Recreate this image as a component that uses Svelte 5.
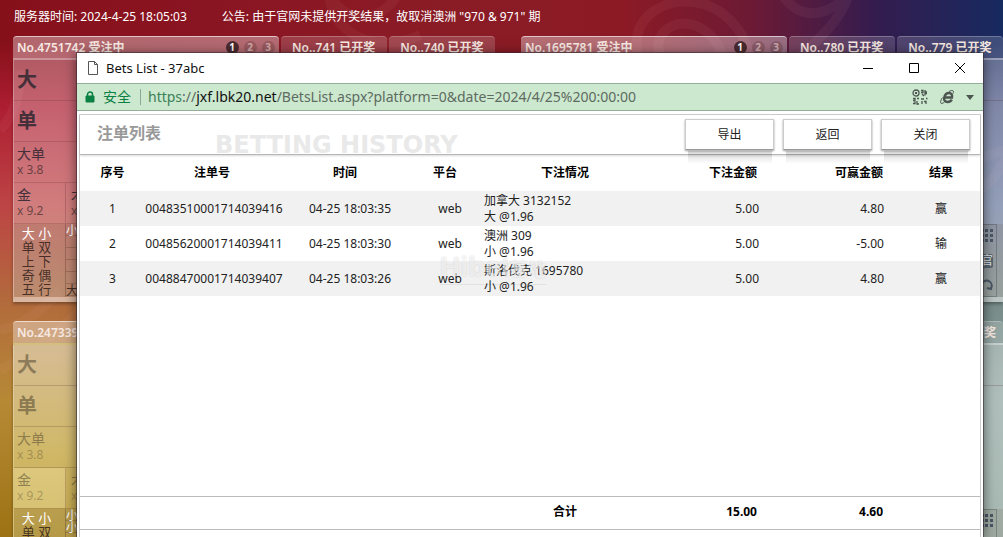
<script lang="ts">
	const bets = [
		{ id: '00483510001714039416', time: '04-25 18:03:35', platform: 'web', game: '加拿大 3132152', pick: '大 @1.96', stake: 5, win: 4.8 },
		{ id: '00485620001714039411', time: '04-25 18:03:30', platform: 'web', game: '澳洲 309', pick: '小 @1.96', stake: 5, win: -5 },
		{ id: '00488470001714039407', time: '04-25 18:03:26', platform: 'web', game: '斯洛伐克 1695780', pick: '小 @1.96', stake: 5, win: 4.8 },
	];

	const boards = [
		{
			theme: 'red',
			current: 'No.4751742 受注中',
			past: ['No..741 已开奖', 'No..740 已开奖'],
			steps: [1, 2, 3],
			roads: ['大 小', '单 双', '上 下', '奇 偶', '五 行'],
			beads: ['小', '', '', '', '', '大'],
		},
		{
			theme: 'blue',
			current: 'No.1695781 受注中',
			past: ['No..780 已开奖', 'No..779 已开奖'],
			steps: [1, 2, 3],
			roads: [],
			beads: [],
		},
		{
			theme: 'gold',
			current: 'No.2473393',
			past: [],
			steps: [],
			roads: ['大 小', '单 双'],
			beads: ['小', '小'],
		},
		{ theme: 'teal', current: '', past: ['', '已开奖'], steps: [], roads: [], beads: [] },
	];

	const actions = ['导出', '返回', '关闭'];

	const totalStake = bets.reduce((sum, bet) => sum + bet.stake, 0);
	const totalWin = bets.reduce((sum, bet) => sum + bet.win, 0);
</script>

{#snippet columns()}
	<colgroup>
		<col class="c-no" />
		<col class="c-id" />
		<col class="c-time" />
		<col class="c-platform" />
		<col />
		<col class="c-stake" />
		<col class="c-win" />
		<col class="c-result" />
	</colgroup>
{/snippet}

<div class="page">
	<svg class="swirls" viewBox="0 0 1003 537" preserveAspectRatio="none" aria-hidden="true">
		<path d="M640 60C620 10 690-20 730 20S730 90 700 70M660 55c-10-25 25-45 50-20s5 40-10 35" />
		<path d="M780-10c20 40 60 20 70 0-10 40-50 60-60 80" />
		<path d="M400-10c-20 40-60 30-70 5 0 40 50 60 90 40" />
		<path d="M0 370q40-20 80-60M0 330q30-5 60-40M0 130q20-20 20-60" />
		<path d="M980 190q20-15 30-40M980 160q12-8 30-10" />
	</svg>

	<header class="notice">
		<span>服务器时间: 2024-4-25 18:05:03</span>
		<span>公告: 由于官网未提供开奖结果，故取消澳洲 "970 &amp; 971" 期</span>
	</header>

	<main class="boards">
		{#each boards as board}
			<section class="board {board.theme}">
				<div class="tabs">
					<div class="tab current">
						<b>{board.current}</b>
						<span class="steps">
							{#each board.steps as step}
								<i class:on={step === 1}>{step}</i>
							{/each}
						</span>
					</div>
					{#each board.past as name}
						<div class="tab"><b>{name}</b></div>
					{/each}
				</div>
				<div class="body">
					{#if board.roads.length}
						<div class="row big">大</div>
						<div class="row big">单</div>
						<div class="row odds"><span>大单</span><small>x 3.8</small></div>
						<div class="row pair">
							<div class="odds first"><span>金</span><small>x 9.2</small></div>
							<div class="odds second"><span>木</span><small>x</small></div>
						</div>
					{:else}
						<div class="row"></div>
						<div class="row plain"></div>
						<div class="row plain"></div>
						<div class="row plain"></div>
					{/if}
					<div class="road">
						<div class="labels">
							{#each board.roads as road, i}
								<div class:on={i === 0}>{road}</div>
							{/each}
						</div>
						<div class="beads">
							{#each board.beads as bead}
								<div class:on={bead === '小'}>{bead}</div>
							{/each}
						</div>
						<div class="tools">
							<svg width="14" height="14" viewBox="0 0 14 14" aria-hidden="true">
								<path d="M1 0h3v3H1zM5 0h3v3H5zM10 0h3v3h-3zM1 5h3v3H1zM5 5h3v3H5zM10 5h3v3h-3zM1 10h3v3H1zM5 10h3v3H5zM10 10h3v3h-3z" />
							</svg>
							{#if board.theme === 'blue'}
								<span>官</span>
								<svg width="14" height="14" viewBox="0 0 14 14" aria-hidden="true">
									<path class="ring" d="M3 11A5 5 0 1 1 11 10M12 7l-1 4-4-1" />
								</svg>
							{/if}
						</div>
					</div>
				</div>
			</section>
		{/each}
	</main>

	<div class="window">
		<div class="titlebar">
			<svg width="12" height="14" viewBox="0 0 12 14" aria-hidden="true">
				<path d="M1.500 .5h6l3 3v10h-9zM7.500 .5v3h3" fill="#fff" stroke="#555" />
			</svg>
			<span class="title">Bets List - 37abc</span>
			<button type="button" aria-label="Minimize">
				<svg width="10" height="10" viewBox="0 0 10 10"><path d="M0 5.500h10" /></svg>
			</button>
			<button type="button" aria-label="Maximize">
				<svg width="10" height="10" viewBox="0 0 10 10"><path d="M.5 .5h9v9h-9z" /></svg>
			</button>
			<button type="button" aria-label="Close window">
				<svg width="12" height="12" viewBox="0 0 12 12"><path d="M1 1l10 10M11 1L1 11" /></svg>
			</button>
		</div>

		<div class="address">
			<svg width="10" height="12" viewBox="0 0 10 12" aria-hidden="true">
				<path d="M1 5h8v6H1z" fill="#0b8043" stroke="#0b8043" />
				<path d="M2.500 5V3.500a2.500 2.500 0 0 1 5 0V5" fill="none" stroke="#0b8043" stroke-width="1.500" />
			</svg>
			<span class="secure">安全</span>
			<span class="url"><em>https</em>://<strong>jxf.lbk20.net</strong>/BetsList.aspx?platform=0&amp;date=2024/4/25%200:00:00</span>
			<svg width="16" height="16" viewBox="0 0 16 16" aria-hidden="true">
				<g fill="none" stroke="#4c5550" stroke-width="1.300">
					<circle cx="4" cy="4" r="3" />
					<path d="M9 1.500h2v2H9M13 1v2h2M10 5l2 2M15 4.500h-2v2M1 9.500h2v2H1M5 9.500h2M1 14.500h2v-2M5 12v3h2M9 10h3M10 12v3M12 12.500h2v2.500M14 9.500h1.500" />
				</g>
				<path d="M3 3h2v2H3z" fill="#4c5550" />
			</svg>
			<svg width="14" height="14" viewBox="0 0 14 14" aria-hidden="true">
				<path d="M11.800 9.600C10.800 11.500 9 12 7.500 12 5 12 3.800 10.300 4.200 8 4.700 5 6.500 3 9 3c2.200 0 3.500 1.500 3 4.500H4.500" fill="none" stroke="#4c5550" stroke-width="2.400" />
				<path d="M2.500 7.500C.5 10.500 0 13 1.200 13.400c1 .3 2.300-.5 3.300-1.400M9 1.500C11 .3 13 .1 13.400 1.200c.2.700 0 1.500-.5 2.500" fill="none" stroke="#4c5550" />
			</svg>
			<svg width="8" height="5" viewBox="0 0 8 5" aria-hidden="true">
				<path d="M0 0h8L4 5z" fill="#4c5550" />
			</svg>
		</div>

		<div class="content">
			<div class="heading">
				<h1>注单列表</h1>
				<p>BETTING HISTORY</p>
				<div class="actions">
					{#each actions as action}
						<button type="button">{action}</button>
					{/each}
				</div>
			</div>

			<div class="list">
				<table>
					{@render columns()}
					<thead>
						<tr>
							<th>序号</th>
							<th class="id">注单号</th>
							<th class="wide">时间</th>
							<th class="wide">平台</th>
							<th>下注情况</th>
							<th class="stake">下注金额</th>
							<th class="win">可赢金额</th>
							<th>结果</th>
						</tr>
					</thead>
					<tbody>
						{#each bets as bet, i}
							<tr>
								<td>{i + 1}</td>
								<td>{bet.id}</td>
								<td>{bet.time}</td>
								<td>{bet.platform}</td>
								<td class="detail">{bet.game}<br />{bet.pick}</td>
								<td class="stake">{bet.stake.toFixed(2)}</td>
								<td class="win">{bet.win.toFixed(2)}</td>
								<td>{bet.win > 0 ? '赢' : '输'}</td>
							</tr>
						{/each}
					</tbody>
				</table>
				<div class="watermark" aria-hidden="true">Hibet<small>基地</small></div>
			</div>

			<table class="totals">
				{@render columns()}
				<tbody>
					<tr>
						<th colspan="4"></th>
						<th>合计</th>
						<th class="stake">{totalStake.toFixed(2)}</th>
						<th class="win">{totalWin.toFixed(2)}</th>
						<th></th>
					</tr>
				</tbody>
			</table>
			<div class="pager"></div>
		</div>
	</div>
</div>

<style>
	:global(body) {
		overflow: hidden;
	}

	.page {
		position: relative;
		height: 100vh;
		overflow: hidden;
		font-family: 'Noto Sans', 'Noto Sans CJK SC', sans-serif;
		font-size: 12px;
		line-height: 16px;
		color: #222;
		background:
			linear-gradient(to bottom, transparent 0, transparent 8%, rgba(190, 35, 60, 0.7) 20%, #bd4445 38%, #b26a3c 56%, #b68a35 75%, #9c7214 100%) left / 78px 100% no-repeat,
			linear-gradient(to bottom, transparent 0, transparent 8%, #4b5684 20%, #65759b 38%, #788c8a 56%, #8da49e 75%, #829a92 100%) right / 20px 100% no-repeat,
			linear-gradient(to right, #86101a 0, #8a1522 20%, #8a1c26 45%, #8c1a25 62%, #6c1a35 75%, #351c4e 87%, #172a60 100%);
	}

	.swirls {
		position: absolute;
		inset: 0;
		width: 100%;
		height: 100%;
		fill: none;
		stroke: rgba(255, 190, 190, 0.06);
		stroke-width: 10;
	}

	.notice {
		position: relative;
		display: flex;
		gap: 35px;
		padding: 9px 14px 11px;
		color: #fff;
	}

	/* lottery boards behind the window */
	.boards {
		position: relative;
		display: grid;
		grid-template-columns: 1fr 1fr;
		gap: 19px 26px;
		padding-left: 13px;
	}

	.tabs {
		display: grid;
		grid-template-columns: 5fr 2fr 2fr;
		gap: 2px;
	}

	.tab {
		display: flex;
		align-items: center;
		justify-content: center;
		height: 22px;
		box-sizing: border-box;
		border-top: 1px solid rgba(255, 255, 255, 0.25);
		border-radius: 4px 4px 0 0;
		background: rgba(255, 255, 255, 0.17);
		color: #f7e9e2;
		white-space: nowrap;
	}

	.tab.current {
		justify-content: space-between;
		padding: 0 4px;
		border-top-color: rgba(255, 255, 255, 0.6);
		background: rgba(255, 255, 255, 0.36);
	}

	.tab b {
		font-weight: 600;
	}

	.teal .tab {
		justify-content: flex-end;
		padding-right: 7px;
	}

	.steps {
		display: flex;
		gap: 5px;
	}

	.steps i {
		width: 13px;
		height: 13px;
		border-radius: 50%;
		background: rgba(90, 50, 50, 0.3);
		color: rgba(255, 225, 225, 0.6);
		font-size: 10px;
		font-style: normal;
		font-weight: 700;
		line-height: 13px;
		text-align: center;
	}

	.steps .on {
		background: #4a2a2e;
		color: #fff;
	}

	.body {
		border-top: 2px solid rgba(255, 255, 255, 0.35);
		border-bottom: 5px solid rgba(255, 255, 255, 0.3);
		border-left: 1px solid rgba(255, 255, 255, 0.25);
		background: rgba(255, 255, 255, 0.3);
		box-shadow: 0 2px 3px rgba(0, 0, 0, 0.3);
	}

	.row {
		height: 41px;
		box-sizing: border-box;
		border-bottom: 1px solid rgba(90, 40, 40, 0.22);
		color: #45303a;
	}

	.row.plain {
		border-bottom-color: transparent;
	}

	.big {
		padding-left: 3px;
		font-size: 20px;
		font-weight: 700;
		line-height: 40px;
	}

	.odds {
		display: flex;
		flex-direction: column;
		padding: 4px 3px 0;
		font-size: 14px;
	}

	.odds small {
		color: rgba(50, 30, 30, 0.65);
		font-size: 12px;
	}

	.pair {
		display: flex;
	}

	.first {
		width: 45px;
		border-right: 1px solid rgba(90, 40, 40, 0.25);
	}

	.second {
		padding-left: 5px;
	}

	.road {
		display: flex;
		height: 73px;
		background: rgba(110, 90, 60, 0.15);
		color: rgba(50, 30, 25, 0.85);
		font-size: 13px;
	}

	.labels {
		width: 52px;
		box-sizing: border-box;
		padding-right: 6px;
		border-right: 1px solid rgba(70, 40, 30, 0.3);
		text-align: center;
	}

	.labels div {
		height: 14px;
		line-height: 14px;
	}

	.labels .on {
		height: 16px;
		line-height: 18px;
	}

	.road .on {
		color: #fff;
	}

	.beads {
		flex: 1;
	}

	.beads div {
		height: 12px;
		border-bottom: 1px solid rgba(70, 40, 30, 0.25);
		box-sizing: border-box;
		font-size: 12px;
		line-height: 13px;
	}

	.tools {
		display: flex;
		flex-direction: column;
		align-items: center;
		justify-content: space-between;
		width: 20px;
		margin-right: 6px;
		padding: 4px 0;
		border: 1px solid rgba(40, 50, 60, 0.3);
		box-sizing: border-box;
		fill: #4c5868;
	}

	.tools span {
		border-radius: 2px;
		background: #596571;
		color: #dfe5ea;
		font-size: 12px;
		line-height: 14px;
	}

	.ring {
		fill: none;
		stroke: #4c5868;
		stroke-width: 2;
	}

	.gold .row,
	.teal .row {
		color: rgba(70, 60, 40, 0.5);
	}

	.gold small,
	.teal small {
		color: rgba(70, 60, 40, 0.35);
	}

	.gold .body {
		background: linear-gradient(#d6bc94, #d0b868 45%, #bc9c38);
	}

	.gold .first {
		background: rgba(255, 245, 190, 0.3);
	}

	/* pop-up browser window */
	.window {
		position: absolute;
		top: 53px;
		right: 20px;
		bottom: 0;
		left: 77px;
		display: flex;
		flex-direction: column;
		background: #fff;
		box-shadow: 0 0 0 1px rgba(50, 40, 45, 0.55), 0 2px 12px rgba(0, 0, 0, 0.6);
	}

	.titlebar {
		display: flex;
		align-items: center;
		height: 30px;
		padding-left: 10px;
	}

	.title {
		flex: 1;
		padding-left: 7px;
		color: #111;
		font-size: 13px;
	}

	.titlebar button {
		width: 46px;
		height: 30px;
		padding: 0;
		border: 0;
		background: none;
	}

	.titlebar button svg {
		display: block;
		margin: 0 auto;
		fill: none;
		stroke: #000;
	}

	.address {
		display: flex;
		align-items: center;
		height: 28px;
		box-sizing: border-box;
		border-top: 1px solid #95ad9b;
		border-bottom: 1px solid #95ad9b;
		padding: 0 9px 0 8px;
		gap: 12px;
		background: #cce8cf;
		color: #5d6b61;
		font-size: 14px;
	}

	.secure {
		margin-left: -4px;
		padding-right: 9px;
		border-right: 1px solid #90a897;
		color: #0b8043;
	}

	.url {
		flex: 1;
		margin-left: -5px;
		white-space: nowrap;
	}

	.url em {
		color: #3c8057;
		font-style: normal;
	}

	.url strong {
		color: #111;
		font-weight: 400;
	}

	.content {
		display: flex;
		flex: 1;
		flex-direction: column;
		margin: 3px 2px 0;
		border: 1px solid #ccc;
		border-bottom: 0;
	}

	.heading {
		display: flex;
		align-items: flex-start;
		height: 39px;
		border-bottom: 1px solid #b5b5b5;
		box-shadow: 0 1px 2px rgba(0, 0, 0, 0.15);
	}

	h1 {
		margin: 0;
		padding: 6px 0 0 17px;
		color: #999;
		font-size: 16px;
		font-weight: 700;
		line-height: 24px;
	}

	.heading p {
		flex: 1;
		height: 39px;
		margin: 0;
		padding: 17px 0 0 54px;
		box-sizing: border-box;
		overflow: hidden;
		color: #e9e9e9;
		font-family: 'DejaVu Sans', sans-serif;
		font-size: 24px;
		font-weight: 700;
		line-height: 26px;
		white-space: nowrap;
	}

	.actions {
		display: flex;
		gap: 9px;
		padding: 4px 10px 0 0;
	}

	.actions button {
		position: relative;
		width: 89px;
		height: 31px;
		padding: 0;
		border: 1px solid #ccc;
		border-bottom-color: #999;
		background: #fff;
		box-shadow: 0 1px 2px rgba(0, 0, 0, 0.4);
		color: #222;
		font: inherit;
	}

	.actions button::after {
		content: '';
		position: absolute;
		top: 31px;
		right: 1px;
		left: 2px;
		height: 13px;
		background: linear-gradient(rgba(0, 0, 0, 0.16), transparent);
	}

	.list {
		position: relative;
		flex: 1;
	}

	table {
		width: 100%;
		table-layout: fixed;
		border-collapse: collapse;
	}

	.c-no {
		width: 65px;
	}

	.c-id {
		width: 138px;
	}

	.c-time {
		width: 134px;
	}

	.c-platform {
		width: 66px;
	}

	.c-stake {
		width: 113px;
	}

	.c-win {
		width: 142px;
	}

	.c-result {
		width: 78px;
	}

	th,
	td {
		height: 35px;
		padding: 0;
		text-align: center;
	}

	th {
		height: 36px;
		color: #000;
		font-weight: 700;
	}

	tbody tr:nth-child(odd) td {
		background: #f1f1f1;
	}

	th.id {
		padding-right: 4px;
	}

	th.wide {
		padding-right: 10px;
	}

	.detail {
		padding-left: 1px;
		text-align: left;
	}

	.stake {
		padding-right: 1px;
		text-align: right;
	}

	.win {
		padding-right: 18px;
		text-align: right;
	}

	th.stake {
		padding-right: 3px;
	}

	th.win {
		padding-right: 19px;
	}

	.watermark {
		position: absolute;
		top: 98px;
		left: 360px;
		border-bottom: 1px solid rgba(0, 0, 0, 0.06);
		color: rgba(255, 255, 255, 0.6);
		font-family: 'Liberation Sans', 'Noto Sans CJK SC', sans-serif;
		font-size: 28px;
		font-weight: 700;
		line-height: 28px;
		text-shadow: 0 0 2px rgba(0, 0, 0, 0.15);
	}

	.watermark small {
		font-size: 18px;
	}

	.totals {
		border-top: 1px solid #bbb;
		border-bottom: 1px solid #bbb;
	}

	.totals th {
		height: 30px;
		padding-bottom: 2px;
	}

	.pager {
		height: 7px;
	}
</style>
